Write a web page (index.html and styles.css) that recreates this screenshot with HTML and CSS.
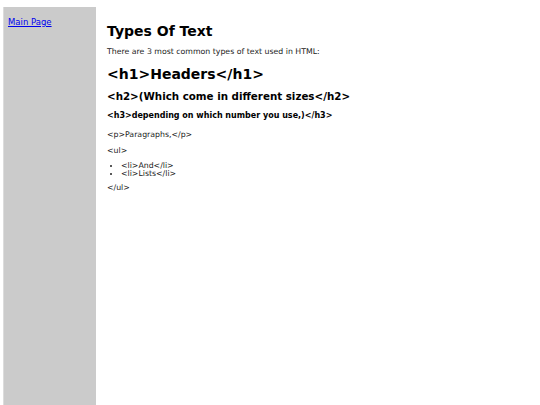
FILE: index.html
```html
<!DOCTYPE html>
<html>
<head>
<meta charset="utf-8">
<link rel="stylesheet" href="styles.css">
</head>
<body>
<div class="page">
  <nav class="sidebar">
    <a href="#" class="nav-link">Main Page</a>
  </nav>
  <main class="content">
    <h2 class="title">Types Of Text</h2>
    <p class="text">There are 3 most common types of text used in HTML:</p>
    <h1 class="h1">&lt;h1&gt;Headers&lt;/h1&gt;</h1>
    <h2 class="h2">&lt;h2&gt;(Which come in different sizes&lt;/h2&gt;</h2>
    <h3 class="h3">&lt;h3&gt;depending on which number you use,)&lt;/h3&gt;</h3>
    <p class="text">&lt;p&gt;Paragraphs,&lt;/p&gt;</p>
    <p class="text">&lt;ul&gt;</p>
    <ul class="list">
      <li>&lt;li&gt;And&lt;/li&gt;</li>
      <li>&lt;li&gt;Lists&lt;/li&gt;</li>
    </ul>
    <p class="text">&lt;/ul&gt;</p>
  </main>
</div>
</body>
</html>
```
FILE: styles.css
```css
html, body {
  margin: 0;
  padding: 0;
  background: #fff;
}
body {
  font-family: "DejaVu Sans", Verdana, sans-serif;
  color: #000;
}
.page {
  display: flex;
  min-height: 100vh;
  align-items: stretch;
}
.sidebar {
  width: 93px;
  margin: 7px 0 0 3px;
  padding: 10px 4px 0 4px;
  background: #cbcbcb;
  box-sizing: border-box;
  border-left: 1px solid #dcdcdc;
  font-size: 8.5px;
  line-height: 1.2;
}
.nav-link {
  color: #0000ee;
}
.content {
  padding: 0 0 0 11px;
}
.title {
  font-size: 14px;
  line-height: 16px;
  margin: 23px 0 8px;
}
.text {
  font-size: 7.8px;
  line-height: 9px;
  margin: 0 0 7px;
  color: #222;
}
.h1 {
  font-size: 14px;
  line-height: 16px;
  margin: 10px 0 8px;
}
.h2 {
  font-size: 10.3px;
  line-height: 12px;
  margin: 0 0 9px;
}
.h3 {
  font-size: 8px;
  line-height: 10px;
  margin: 0 0 9px;
}
.list {
  font-size: 7.8px;
  line-height: 8px;
  margin: 6px 0 5px;
  padding-left: 14px;
  color: #222;
}
.list + .text {
  margin-top: 0;
}
```
